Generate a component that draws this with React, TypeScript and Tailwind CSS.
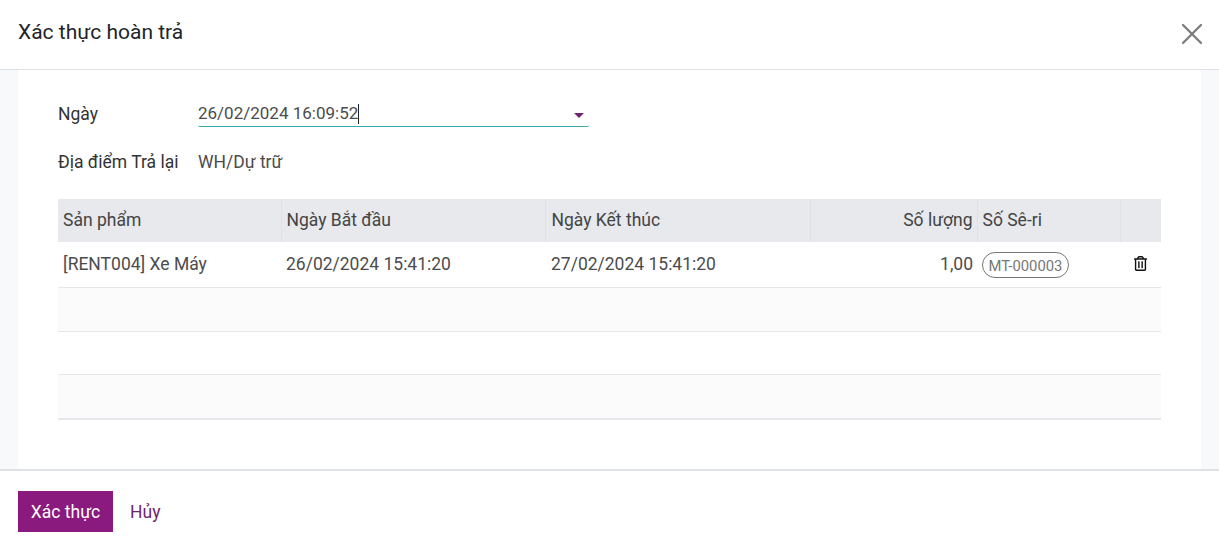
import { FaRegTrashAlt } from "react-icons/fa";
import { X } from "lucide-react";

const headCell = "border-r border-[#dee2e6] px-[5px] font-normal text-left";
const emptyRows = ["bg-[#fbfbfb] h-[44px] border-b", "h-[43px] border-b", "bg-[#fbfbfb] h-[45px] border-b-2"];

export default function App() {
  return (
    <div className="flex h-[549px] w-[1219px] flex-col overflow-hidden bg-white font-['Roboto',sans-serif] text-[17.5px] text-[#4c4c4c]">
      <header className="flex h-[70px] shrink-0 items-start justify-between border-b border-[#dee2e6] pl-[18px] pr-[9px]">
        <h1 className="mt-[17px] text-[21px] leading-[30px] font-normal text-[#212529]">Xác thực hoàn trả</h1>
        <button className="mt-[16px] text-[#7c7c7c]" aria-label="Đóng">
          <X size={36} strokeWidth={1.5} />
        </button>
      </header>

      <main className="flex min-h-0 flex-1 bg-[#f8f9fa] px-[18px]">
        <div className="flex-1 bg-white px-[40px] pt-[27px]">
          <div className="flex h-[30px] items-center">
            <label className="w-[140px] pt-[4px] text-[#333]">Ngày</label>
            <div className="relative flex h-[30px] w-[391px] items-center rounded-b-[2px] border-b border-[#3fa9ad] pt-[4px] text-[17px]">
              <span>26/02/2024 16:09:52</span>
              <span className="h-[20px] w-px bg-[#212529]" />
              <span className="absolute top-[16px] right-[5px] border-x-[5px] border-t-[5px] border-x-transparent border-t-[#71256f]" />
            </div>
          </div>

          <div className="mt-[20px] flex h-[30px] items-center">
            <label className="w-[140px] text-[#333]">Địa điểm Trả lại</label>
            <span>WH/Dự trữ</span>
          </div>

          <table className="mt-[22px] w-[1103px] table-fixed border-collapse">
            <thead>
              <tr className="h-[43px] bg-[#e7e9ed] text-[#444]">
                <th className={`${headCell} w-[223px]`}>Sản phẩm</th>
                <th className={`${headCell} w-[264px]`}>Ngày Bắt đầu</th>
                <th className={`${headCell} w-[265px] !pl-[6px]`}>Ngày Kết thúc</th>
                <th className={`${headCell} w-[167px] !pr-[4px] !text-right`}>Số lượng</th>
                <th className={`${headCell} w-[143px]`}>Số Sê-ri</th>
                <th className="font-normal" />
              </tr>
            </thead>
            <tbody>
              <tr className="h-[45px] border-b border-[#e5e7ea]">
                <td className="px-[5px]">[RENT004] Xe Máy</td>
                <td className="px-[5px]">26/02/2024 15:41:20</td>
                <td className="pr-[5px] pl-[6px]">27/02/2024 15:41:20</td>
                <td className="pr-[4px] pl-[5px] text-right">1,00</td>
                <td className="pr-[4px] pl-[5px]">
                  <span className="inline-block h-[26px] translate-y-[1px] rounded-full border border-[#777] px-[5.5px] text-[14.8px] leading-[26px] text-[#777]">
                    MT-000003
                  </span>
                </td>
                <td className="pb-[2px] text-[#111]">
                  <FaRegTrashAlt size={15} className="ml-[13px]" />
                </td>
              </tr>
              {emptyRows.map((row, i) => (
                <tr key={i} className={`${row} border-[#e5e7ea]`}>
                  <td colSpan={6} />
                </tr>
              ))}
            </tbody>
          </table>
        </div>
      </main>

      <footer className="flex h-[80px] shrink-0 items-start gap-[4px] border-t-2 border-[#dee2e6] pt-[20px] pl-[18px]">
        <button className="h-[41px] w-[95px] bg-[#8a1a7e] pt-[2px] text-white">Xác thực</button>
        <button className="h-[41px] px-[13px] pt-[2px] text-[#71256f]">Hủy</button>
      </footer>
    </div>
  );
}
